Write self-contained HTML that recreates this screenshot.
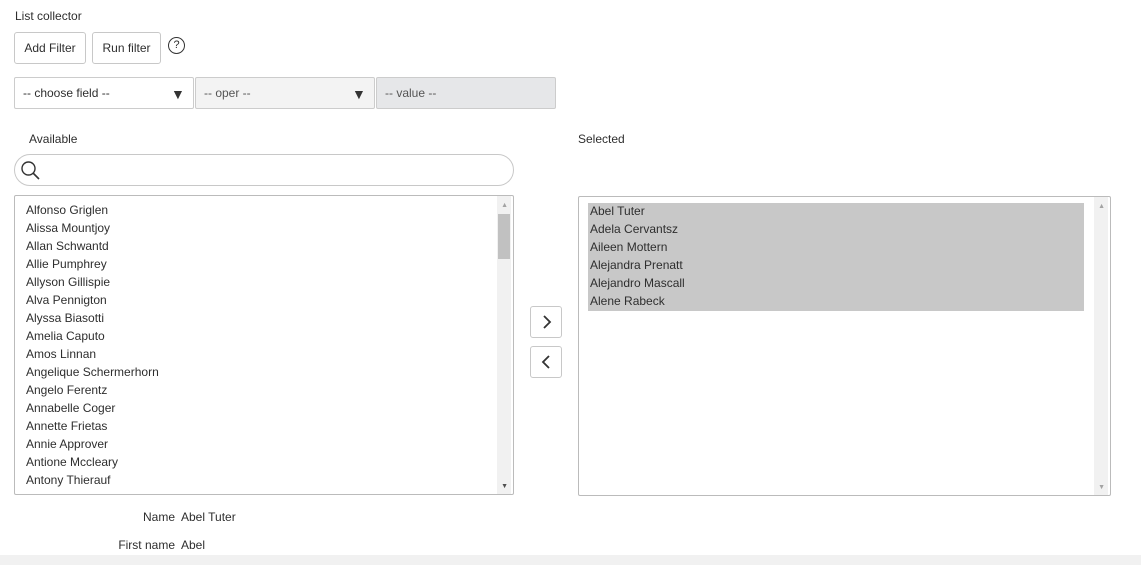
<!DOCTYPE html><html><head><style>
body{margin:0;width:1141px;height:565px;background:#fff;font-family:"Liberation Sans",sans-serif;font-size:12px;color:#2e2e2e;position:relative;overflow:hidden;letter-spacing:0}
.a{position:absolute}
.btn{position:absolute;border:1px solid #c8c8c8;border-radius:3px;background:#fff;box-sizing:border-box;text-align:center}
.sel{position:absolute;box-sizing:border-box;border:1px solid #ccc;border-radius:2px;padding-left:8px;line-height:30px}
.list div{height:18px;line-height:17px}
</style></head><body>
<div class="a" style="left:15px;top:9px">List collector</div>
<div class="btn" style="left:14px;top:32px;width:72px;height:32px;line-height:30px">Add Filter</div>
<div class="btn" style="left:92px;top:32px;width:69px;height:32px;line-height:30px">Run filter</div>
<div class="a" style="left:168px;top:37px;width:15px;height:15px;border:1.3px solid #333;border-radius:50%;text-align:center;line-height:15px;font-size:11px">?</div>
<div class="sel" style="left:14px;top:77px;width:180px;height:32px;background:#fff">-- choose field --<span class="a" style="left:156px;top:1px;font-size:14px;color:#333">▼</span></div>
<div class="sel" style="left:195px;top:77px;width:180px;height:32px;background:#f3f3f3;color:#555">-- oper --<span class="a" style="left:156px;top:1px;font-size:14px;color:#333">▼</span></div>
<div class="sel" style="left:376px;top:77px;width:180px;height:32px;background:#e6e7e9;color:#555">-- value --</div>
<div class="a" style="left:29px;top:132px">Available</div>
<div class="a" style="left:578px;top:132px">Selected</div>
<div class="a" style="left:14px;top:154px;width:498px;height:30px;border:1px solid #c8c8c8;border-radius:16px"></div>
<svg class="a" style="left:20px;top:160px" width="22" height="22"><circle cx="8.5" cy="8.5" r="6.5" fill="none" stroke="#333" stroke-width="1.4"/><line x1="13" y1="13" x2="19" y2="19" stroke="#333" stroke-width="1.6"/></svg>
<div class="a" style="left:14px;top:195px;width:498px;height:298px;border:1px solid #bbb;border-radius:2px;overflow:hidden">
<div class="a" style="right:2px;top:0;width:14px;height:298px;background:#f1f1f1"></div>
<div class="a" style="right:3px;top:18px;width:12px;height:45px;background:#c1c1c1"></div>
<div class="a" style="right:5px;top:6px;font-size:7px;color:#a3a3a3">▲</div>
<div class="a" style="right:5px;bottom:4px;font-size:7px;color:#505050">▼</div>
<div class="list a" style="left:11px;top:6px">
<div>Alfonso Griglen</div><div>Alissa Mountjoy</div><div>Allan Schwantd</div><div>Allie Pumphrey</div><div>Allyson Gillispie</div><div>Alva Pennigton</div><div>Alyssa Biasotti</div><div>Amelia Caputo</div><div>Amos Linnan</div><div>Angelique Schermerhorn</div><div>Angelo Ferentz</div><div>Annabelle Coger</div><div>Annette Frietas</div><div>Annie Approver</div><div>Antione Mccleary</div><div>Antony Thierauf</div></div>
</div>
<div class="btn" style="left:530px;top:306px;width:32px;height:32px"><svg width="30" height="30"><path d="M13 9l6 6-6 6" fill="none" stroke="#333" stroke-width="1.8"/></svg></div>
<div class="btn" style="left:530px;top:346px;width:32px;height:32px"><svg width="30" height="30"><path d="M18 9l-6 6 6 6" fill="none" stroke="#333" stroke-width="1.8"/></svg></div>
<div class="a" style="left:578px;top:196px;width:531px;height:298px;border:1px solid #bbb;border-radius:2px;overflow:hidden">
<div class="a" style="right:2px;top:0;width:14px;height:298px;background:#f1f1f1"></div>
<div class="a" style="right:5px;top:6px;font-size:7px;color:#a3a3a3">▲</div>
<div class="a" style="right:5px;bottom:4px;font-size:7px;color:#a3a3a3">▼</div>
<div class="list a" style="left:9px;top:6px;width:496px;height:108px;background:#c8c8c8;padding-left:2px;box-sizing:border-box">
<div>Abel Tuter</div><div>Adela Cervantsz</div><div>Aileen Mottern</div><div>Alejandra Prenatt</div><div>Alejandro Mascall</div><div>Alene Rabeck</div></div>
</div>
<div class="a" style="left:100px;top:510px;width:75px;text-align:right">Name</div>
<div class="a" style="left:181px;top:510px">Abel Tuter</div>
<div class="a" style="left:100px;top:538px;width:75px;text-align:right">First name</div>
<div class="a" style="left:181px;top:538px">Abel</div>
<div class="a" style="left:0;top:555px;width:1141px;height:10px;background:#f1f1f1"></div>
</body></html>
